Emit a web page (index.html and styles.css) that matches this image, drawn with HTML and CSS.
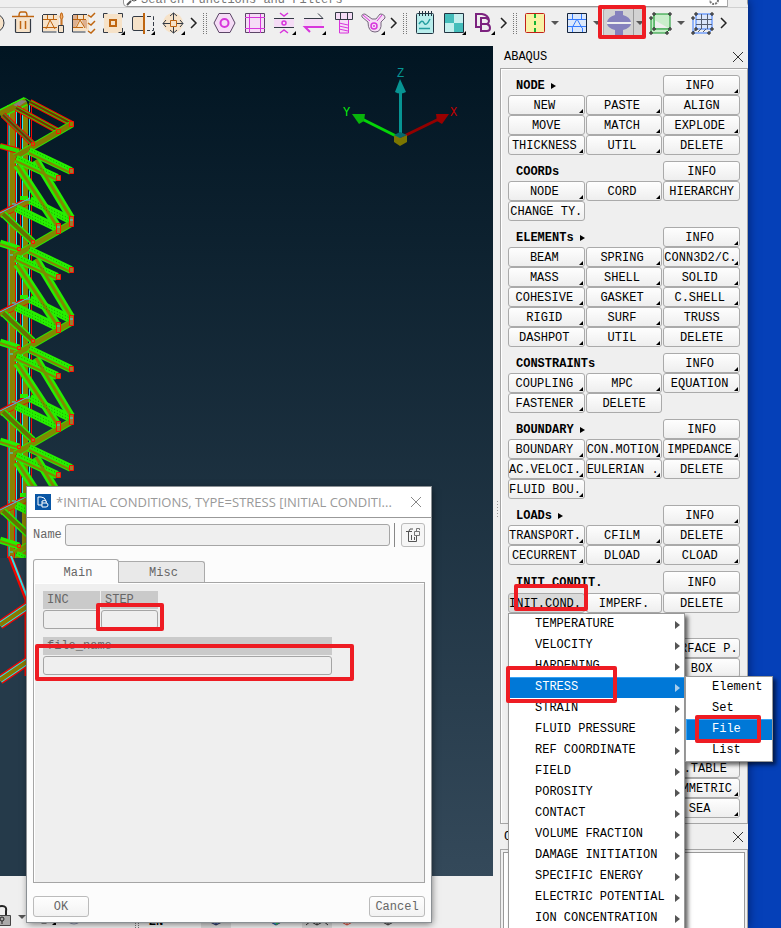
FILE: index.html
```html
<!DOCTYPE html>
<html lang="en">
<head>
<meta charset="utf-8">
<title>ABAQUS deck</title>
<link rel="stylesheet" href="styles.css">
</head>
<body>
<div class="desktop">
<div class="app">
  <header class="search-row">
    <div class="search-field">
      <svg class="glass" width="12" height="12" viewBox="0 0 12 12"><path d="M1 11l4-4" stroke="#555" stroke-width="2"/><circle cx="8" cy="4" r="3" fill="none" stroke="#555"/></svg>
      <input type="text" aria-label="Search" placeholder="Search Functions and Filters">
      <svg class="glass" width="12" height="12" viewBox="0 0 12 12"><circle cx="6" cy="6" r="4" fill="none" stroke="#777" stroke-width="2" stroke-dasharray="2 1"/></svg>
      <span class="search-end"></span>
    </div>
  </header>

  <nav class="toolbar" aria-label="Tools">
    <span class="edge"><svg width="9" height="30" viewBox="0 0 9 30"><circle cx="-5" cy="15" r="9" fill="#f6e2c8" stroke="#333a45"/></svg></span>
    <button class="tool" aria-label="Delete"><svg viewBox="0 0 30 30"><path d="M7 10h15v15H7z" fill="#f6e2c8"/><path d="M6.500 11v12.500q0 1 1 1h13q1 0 1-1V11" fill="none" stroke="#333a45" stroke-width="1.200"/><path d="M3 8.500h22M10 8q0-4 2-4h4q2 0 2 4M11.500 13v8M16.500 13v8" fill="none" stroke="#bf6510" stroke-width="1.500"/></svg></button>
    <button class="tool" aria-label="Mesh edit"><svg viewBox="0 0 30 30"><path d="M4 7h16v16H4z" fill="#f6e2c8"/><path d="M4 6.500h14M3.500 7v17h14" fill="none" stroke="#333a45"/><path d="M4 11.500h14M4 19.500h14M8.500 7v5M14.500 7v5M11 12l-4 9M11 12l5 9" fill="none" stroke="#bf6510"/><path d="M19.500 17.500h5v7h-5z" fill="#f6e2c8" stroke="#333a45"/><path d="M22 17v-6l-1-2 1-4h1l1 4-1 2v6" fill="#f6b06d" stroke="#bf6510"/></svg></button>
    <button class="tool" aria-label="Mesh check"><svg viewBox="0 0 30 30"><path d="M4 7h16v16H4z" fill="#f6e2c8"/><path d="M4 7h5v5H4zM13 12h5v9l-4-4zM4 12h6l-4 8H4z" fill="#ddb08f"/><path d="M4 6.500h14M3.500 7v17h13" fill="none" stroke="#333a45"/><path d="M4 11.500h13M4 19.500h10M8.500 7v5M14.500 7v5M11 12l-4 8M11 12l5 8" fill="none" stroke="#bf6510"/><path d="M19 7l3 2 4-4M19 15l3 2 4-4M19 23l3 2 4-4" fill="none" stroke="#bf6510" stroke-width="1.500"/></svg></button>
    <button class="tool" aria-label="Center"><svg viewBox="0 0 30 30"><path d="M5 6h18v19H5z" fill="#f6e2c8"/><path d="M4.500 10V5.500h4M19 5.500h4.500v4M23.500 20v4.500h-4M9 24.500H4.500v-4" fill="none" stroke="#333a45"/><path d="M11 12h6v6h-6z" fill="#f6e2c8" stroke="#bf6510" stroke-width="2"/><path d="M26 23v4h-4z"/></svg></button>
    <button class="tool" aria-label="Reflect"><svg viewBox="0 0 30 30"><path d="M15 8.500H5q-1.500 0-1.500 1.500v11q0 1.500 1.500 1.500h10" fill="#f6e2c8" stroke="#333a45"/><path d="M15 5v21" stroke="#bf6510" stroke-width="2"/><path d="M18 8.500h6.500v14H18" fill="none" stroke="#333a45" stroke-dasharray="4 2"/><path d="M26 23v4h-4z"/></svg></button>
    <button class="tool" aria-label="Move"><svg viewBox="0 0 30 30"><circle cx="14" cy="15" r="10" fill="#f6e2c8"/><path d="M14.500 5v20M4 15.500h20M11 8l3.500-3 3.500 3M11 22l3.500 3 3.500-3M7 12l-3 3.500 3 3.500M21 12l3 3.500-3 3.500" fill="none" stroke="#333a45"/><path d="M11.500 12.500h6v6h-6z" fill="#f6e2c8" stroke="#bf6510"/><path d="M26 23v4h-4z"/></svg></button>
    <span class="more"><svg viewBox="0 0 10 30"><path d="M2 10l5 5-5 5" fill="none" stroke="#222" stroke-width="1.500"/></svg></span>
    <span class="grip"></span>
    <button class="tool" aria-label="Nut"><svg viewBox="0 0 30 30"><path d="M10 5.500h11l5 9.500-5 9.500H10L5 15z" fill="#f5dcf6" stroke="#5b4566"/><circle cx="15.500" cy="15" r="4" fill="#f5dcf6" stroke="#d835dc" stroke-width="2"/></svg></button>
    <button class="tool" aria-label="Frame"><svg viewBox="0 0 30 30"><path d="M6.500 5.500h19v19h-19z" fill="#f5dcf6" stroke="#5b4566"/><path d="M6 9.500h20M6 20.500h20M10.500 6v19M21.500 6v19" stroke="#d835dc"/></svg></button>
    <button class="tool" aria-label="Joint"><svg viewBox="0 0 30 30"><path d="M5 10h20v9H5z" fill="#f5dcf6"/><path d="M5 10.500h20M5 19.500h20" stroke="#333a45"/><path d="M11 5l4 3 4-3M11 25l4-3 4 3" fill="none" stroke="#d835dc" stroke-width="1.500"/><circle cx="15" cy="15" r="2" fill="none" stroke="#d835dc" stroke-width="1.500"/><path d="M27 23v4h-4z"/></svg></button>
    <button class="tool" aria-label="Swap"><svg viewBox="0 0 30 30"><path d="M5 11h18v7H5z" fill="#f5dcf6"/><path d="M5 10.500h19l-5-5" fill="none" stroke="#333a45"/><path d="M25 19H6l5 5" fill="none" stroke="#d835dc" stroke-width="2"/><path d="M27 23v4h-4z"/></svg></button>
    <button class="tool" aria-label="Bolt"><svg viewBox="0 0 30 30"><path d="M6.500 4.500h17v7h-17z" fill="#f5dcf6" stroke="#333a45"/><path d="M11.500 5v7M18.500 5v7" stroke="#333a45"/><path d="M10.500 12v13h9V12" fill="#f5dcf6" stroke="#d835dc"/><path d="M10 15l9 2M10 18l9 2M10 21l9 2" stroke="#d835dc"/></svg></button>
    <button class="tool" aria-label="Link"><svg viewBox="0 0 30 30"><path d="M9 14L3 9q-1-3 3-3l7 5h4l4-5q5 0 5 4l-4 4q1 10-6 10t-7-10z" fill="#f5dcf6" stroke="#75677d"/><path d="M4 7l7 6M23 7l-5 6" stroke="#d835dc"/><circle cx="15" cy="18" r="3" fill="#f5dcf6" stroke="#d835dc" stroke-width="1.500"/><circle cx="15" cy="18" r="1" fill="#d835dc"/><path d="M26 23v4h-4z"/></svg></button>
    <span class="more"><svg viewBox="0 0 10 30"><path d="M2 10l5 5-5 5" fill="none" stroke="#222" stroke-width="1.500"/></svg></span>
    <span class="grip"></span>
    <button class="tool" aria-label="Report"><svg viewBox="0 0 30 30"><rect x="7.500" y="5.500" width="17" height="20" rx="1" fill="#b9edec" stroke="#223442"/><path d="M10.500 3v5M13.500 3v5M16.500 3v5M19.500 3v5M22.500 3v5" stroke="#223442"/><path d="M10 16q3-5 5-1t6-4M10 20.500h11" fill="none" stroke="#239da0" stroke-width="1.500"/></svg></button>
    <button class="tool" aria-label="Checker"><svg viewBox="0 0 30 30"><path d="M6 6h18v18H6z" fill="#c4efee"/><path d="M6 6h9v9H6zM15 15h10v9H15z" fill="#44bdbb"/><path d="M5.500 5.500h19v19h-19z" fill="none" stroke="#223442"/><path d="M27 23v4h-4z"/></svg></button>
    <button class="tool" aria-label="Deck"><svg viewBox="0 0 30 30"><path d="M12 19H7V6h6q6 1 7 6M12 10v13h6q3 0 3-3t-3-4q2-1 2-3t-3-3zM12 16h6" fill="none" stroke="#7c237f" stroke-width="2"/><path d="M26 23v4h-4z"/></svg></button>
    <span class="more"><svg viewBox="0 0 10 30"><path d="M2 10l5 5-5 5" fill="none" stroke="#222" stroke-width="1.500"/></svg></span>
    <span class="grip"></span>
    <button class="tool" aria-label="Split"><svg viewBox="0 0 30 30"><rect x="6.500" y="5.500" width="19" height="19" rx="1" fill="#f8f2a5" stroke="#c32118"/><path d="M16 6v18" stroke="#16b332" stroke-width="2" stroke-dasharray="4 3"/></svg></button>
    <span class="drop"></span>
    <button class="tool" aria-label="Mesh view"><svg viewBox="0 0 30 30"><path d="M6.500 5.500h19v19h-19z" fill="#dbe8fb"/><path d="M6 11.500h19M6 18.500h19M11.500 5v6M20.500 5v6M16 11l-5 9M16 11l5 9M11.500 20v4M21.500 20v4" stroke="#347bff" fill="none"/><path d="M6.500 5.500h19v19h-19z" fill="none" stroke="#15243c"/></svg></button>
    <span class="drop"></span>
    <span class="pressed">
      <button class="tool" aria-label="Section"><svg viewBox="0 0 30 30"><path d="M12 3h8v4q7 2 8 7H4q1-5 8-7zM4 16h24q-1 4-8 6v5h-8v-5q-7-2-8-6z" fill="#8581bd"/><path d="M4 15h24" stroke="#eee" stroke-width="2"/></svg></button>
      <span class="drop"></span>
    </span>
    <button class="tool" aria-label="Box select"><svg viewBox="0 0 30 30"><path d="M6 10l4-4v14l-4 5z" fill="#a9dcae"/><path d="M6 24l4-4h15l-4 4z" fill="#a9dcae"/><path d="M9 6h16v15H9zM6 10v15h15l4-4" fill="#c9eecb" stroke="#12952a"/><path d="M8 5h2v2H8zM24 5h2v2h-2zM24 20h2v2h-2zM5 9h2v2H5zM5 24h2v2H5zM21 24h2v2h-2zM8 20h2v2H8z" fill="#fff" stroke="#111"/></svg></button>
    <span class="drop"></span>
    <button class="tool" aria-label="Grid select"><svg viewBox="0 0 30 30"><path d="M9 6h16v15H9z" fill="#dbe6fb" stroke="#3679ff"/><path d="M9 11.500h16M9 16.500h16M14.500 6v15M20.500 6v15M6 24l4-3M11 24l3-3M16 24l3-3" stroke="#555e70"/><path d="M6 10v15h16l3-4" fill="none" stroke="#3679ff"/><path d="M8 5h2v2H8zM24 5h2v2h-2zM24 20h2v2h-2zM5 9h2v2H5zM5 24h2v2H5zM21 24h2v2h-2zM8 20h2v2H8z" fill="#fff" stroke="#111"/></svg></button>
    <span class="more"><svg viewBox="0 0 10 30"><path d="M4 10l5 5-5 5" fill="none" stroke="#222" stroke-width="1.500"/></svg></span>
  </nav>

  <div class="work">
    <main class="left">
      <div class="viewport">
        <svg class="model" width="100" height="830" viewBox="0 46 100 830">
          <defs>
            <g id="col">
              <path d="M12 0V99M25 0V99" stroke="#8a8200" stroke-width="6"/>
              <path d="M9 0V99M16.500 0V99M22.500 0V99M29.500 0V99" stroke="#28e6ee"/>
              <path d="M7.500 0V99M15.500 0V99M20.500 0V99M31.500 0V99" stroke="#f00800"/>
            </g>
            <g id="bay">
              <path d="M0 215L30 200" stroke="#f00800" stroke-width="7"/>
              <path d="M0 216L30 201" stroke="#8a8200" stroke-width="4"/>
              <path d="M0 213L30 198" stroke="#28e6ee"/>
              <g fill="none" stroke="#27ef00" stroke-width="8">
                <path d="M36 160L71 218"/><path d="M30 200L70 220"/><path d="M29 151L71 171"/>
                <path d="M16 159L57 178"/><path d="M17 165L57 226"/><path d="M16 208L57 228"/>
                <path d="M3 214L33 242" stroke-width="7"/><path d="M0 243L19 249" stroke-width="7"/><path d="M15 256L72 223" stroke-width="7"/>
                <path d="M20 198h8M22 251h12" stroke-width="4"/>
              </g>
              <g fill="none" stroke="#7f8a00">
                <path d="M36 160L71 218M17 165L57 226" stroke-width="3"/>
                <path d="M29 153L71 173M16 161L57 180M0 244L19 250" stroke-width="2"/>
                <path d="M3 214L33 242" stroke="#687000" stroke-width="4"/>
                <path d="M15 256L72 223" stroke-width="5"/>
              </g>
              <g fill="none" stroke="#159900" stroke-dasharray="1 2">
                <path d="M30 199L70 219M29 149L70 169M16 157L57 176M16 207L57 227M30 202L70 222M16 210L57 230"/>
              </g>
              <g fill="#9c7d2f" stroke="#ff1400">
                <path d="M56.500 175.500h4v5h-4zM69.500 168.500h4v5h-4zM31.500 240.500h3v3h-3zM17.500 247.500h3v3h-3z"/>
                <path d="M56.500 223.500h4v10h-4zM69.500 216.500h4v10h-4z"/>
              </g>
              <path d="M57 227h3M70 220h3M12 204h4M26 200h4M10 255h3" stroke="#28e6ee"/>
            </g>
          </defs>
          <use href="#col" y="105"/><use href="#col" y="204"/><use href="#col" y="303"/><use href="#col" y="402"/>
          <path d="M12 500v58M25 500v58" stroke="#8a8200" stroke-width="6"/>
          <path d="M9 500v58M16 500v58" stroke="#28e6ee"/><path d="M7.500 500v58M14.500 500v58" stroke="#f00800"/>
          <path d="M0 114L26 101" stroke="#27ef00" stroke-width="9"/><path d="M0 114L26 101" stroke="#847c00" stroke-width="6"/>
          <path d="M13 105l8-5 6 1-9 6z" fill="#887d77"/>
          <path d="M11 104L25 98l6 4" fill="none" stroke="#27ef00"/>
          <g fill="none">
            <path d="M30 102L72 124M16 108L58 131M3 115L33 144M0 146L19 151" stroke="#f00800" stroke-width="6"/>
            <path d="M30 102L72 124M16 108L58 131M0 146L19 151" stroke="#2bdc00" stroke-width="4"/>
            <path d="M3 115L33 144" stroke="#3d9a20" stroke-width="4"/>
            <path d="M30 102L72 124M16 108L58 131M3 115L33 144" stroke="#7a2d00" stroke-width="2"/>
            <path d="M15 157L72 124" stroke="#27ef00" stroke-width="7"/><path d="M15 157L72 124" stroke="#827c00" stroke-width="5"/>
          </g>
          <path d="M56.500 129.500h4v4h-4zM69.500 121.500h4v5h-4zM31.500 142.500h3v3h-3z" fill="#8a8200" stroke="#ff1400"/>
          <use href="#bay"/><use href="#bay" y="99"/><use href="#bay" y="198"/><use href="#bay" y="297"/><use href="#bay" y="396"/>
          <path d="M0 558h100v318H0z" class="mask"/>
          <path d="M10 556L28 602M27 600v76" fill="none" stroke="#f00800" stroke-width="5"/><path d="M11 556L29 602" stroke="#28e6ee" stroke-width="2"/>
          <path d="M0 625l28-19M0 680l28-19" stroke="#f00800" stroke-width="9"/>
          <path d="M0 625l28-19M0 680l28-19" stroke="#28e6ee" stroke-width="6"/>
          <path d="M0 625l28-19M0 680l28-19" stroke="#8a7800" stroke-width="4"/>
        </svg>
        <svg class="axes" width="140" height="100" viewBox="0 0 140 100">
          <path d="M70.500 76V30" stroke="#079493" stroke-width="3"/><path d="M70 19l6 13q-6 3-11 0z" fill="#079493"/>
          <path d="M70 78L30 58" stroke="#04d407" stroke-width="3"/><path d="M22 54l13 0-1 7-5 3z" fill="#08b40b"/>
          <path d="M70 78L111 58" stroke="#920000" stroke-width="3"/><path d="M119 54l-13 0 1 7 5 3z" fill="#980000"/>
          <path d="M64 75l6 3 7-3v7l-7 4-6-4z" fill="#7c7600"/><path d="M64 75l6-3 7 3-7 3z" fill="#07696b"/>
          <text x="67" y="17" fill="#079493">Z</text><text x="13" y="56" fill="#08ef0b">Y</text><text x="120" y="56" fill="#c40000">X</text>
        </svg>
      </div>
      <div class="statusbar">
        <svg class="lock" width="14" height="24" viewBox="0 0 14 24"><path d="M-3 12V7q0-5 5-5t4 5v5" fill="none" stroke="#222" stroke-width="2"/><path d="M-4 11.500h14.500v10H-4z" fill="#aaa" stroke="#444"/><circle cx="2" cy="15" r="2" fill="none" stroke="#222"/><path d="M2 17v3" stroke="#222"/></svg>
        <span class="drop wide"></span>
        <svg width="30" height="24" viewBox="0 0 30 24"><path d="M11.500 8h5v11h-5z" fill="#999" stroke="#222"/><path d="M26 17v4h-4z"/></svg>
        <svg width="30" height="24" viewBox="0 0 30 24"><circle cx="14" cy="11" r="9" fill="#e3e5ed" stroke="#8b92aa"/><circle cx="14" cy="11" r="6" fill="none" stroke="#8b92aa"/></svg>
        <span class="space"></span><span class="grip low"></span>
        <span class="lang">EN</span>
        <svg width="30" height="24" viewBox="0 0 30 24"><path d="M5 12.500h9v6H5zM14.500 10.500h10v8h-10z" fill="#eee" stroke="#777"/></svg>
        <svg class="on" width="30" height="24" viewBox="0 0 30 24"><path d="M3 7l12-5 12 5v8l-12 6-12-6z" fill="#7188cf" stroke="#28345c"/><path d="M15 12v9" stroke="#28345c"/></svg>
        <svg width="30" height="24" viewBox="0 0 30 24"><path d="M5.500 6.500h19v12h-19z" fill="#cbd8f5" stroke="#15243c"/><path d="M11.500 7v11M18.500 7v11" stroke="#15243c"/></svg>
        <svg width="30" height="24" viewBox="0 0 30 24"><path d="M4 7l11-5 11 5v8l-11 6-11-6z" fill="#24b8d0" stroke="#26418e"/><path d="M15 12v9l8-5z" fill="#37c94e"/></svg>
        <span class="space small"></span>
        <svg class="on" width="30" height="24" viewBox="0 0 30 24"><path d="M4 7l11-5 11 5v8l-11 6-11-6zM15 21v-9M4 21l11-9 11 9" fill="#ddd" stroke="#333"/></svg>
        <svg width="30" height="24" viewBox="0 0 30 24"><path d="M4 7l11-5 11 5v8l-11 6-11-6zM15 12v9" fill="none" stroke="#e24a36"/></svg>
        <span class="space small"></span>
        <svg width="30" height="24" viewBox="0 0 30 24"><path d="M4 7l11-5 11 5v8l-11 6-11-6zM15 12v9" fill="#aaa" stroke="#444"/></svg>
      </div>
    </main>

    <aside class="dock">
      <div class="dock-title"><span>ABAQUS</span><button class="close" aria-label="Close"><svg width="12" height="12" viewBox="0 0 12 12"><path d="M1 1l10 10M11 1L1 11" stroke="#333"/></svg></button></div>
      <div class="deck">
        <section><h2 class="arrow">NODE</h2><button class="m">INFO</button>
          <button class="m">NEW</button><button class="m">PASTE</button><button>ALIGN</button>
          <button>MOVE</button><button class="m">MATCH</button><button class="m">EXPLODE</button>
          <button class="m">THICKNESS</button><button class="m">UTIL</button><button>DELETE</button></section>
        <section><h2>COORDs</h2><button>INFO</button>
          <button class="m">NODE</button><button class="m">CORD</button><button>HIERARCHY</button>
          <button>CHANGE TY.</button></section>
        <section><h2 class="arrow">ELEMENTs</h2><button class="m">INFO</button>
          <button class="m">BEAM</button><button class="m">SPRING</button><button class="m">CONN3D2/C.</button>
          <button class="m">MASS</button><button class="m">SHELL</button><button class="m">SOLID</button>
          <button class="m">COHESIVE</button><button class="m">GASKET</button><button class="m">C.SHELL</button>
          <button class="m">RIGID</button><button class="m">SURF</button><button>TRUSS</button>
          <button class="m">DASHPOT</button><button class="m">UTIL</button><button>DELETE</button></section>
        <section><h2>CONSTRAINTs</h2><button class="m">INFO</button>
          <button class="m">COUPLING</button><button class="m">MPC</button><button class="m">EQUATION</button>
          <button class="m">FASTENER</button><button>DELETE</button></section>
        <section><h2 class="arrow">BOUNDARY</h2><button>INFO</button>
          <button class="m">BOUNDARY</button><button class="m">CON.MOTION</button><button class="m">IMPEDANCE</button>
          <button class="m">AC.VELOCI.</button><button class="m">EULERIAN .</button><button>DELETE</button>
          <button class="m">FLUID BOU.</button></section>
        <section><h2 class="arrow">LOADs</h2><button class="m">INFO</button>
          <button class="m">TRANSPORT.</button><button class="m">CFILM</button><button>DELETE</button>
          <button class="m">CECURRENT</button><button class="m">DLOAD</button><button class="m">CLOAD</button></section>
        <section class="init"><h2>INIT.CONDIT.</h2><button>INFO</button>
          <div class="menu-host"><button class="m down">INIT.COND.</button>
            <ul class="menu">
              <li><button>TEMPERATURE</button></li>
              <li><button>VELOCITY</button></li>
              <li><button>HARDENING</button></li>
              <li class="picked"><button>STRESS</button>
                <ul class="menu sub">
                  <li><button>Element</button></li>
                  <li><button>Set</button></li>
                  <li class="picked"><button>File</button></li>
                  <li><button>List</button></li>
                </ul></li>
              <li><button>STRAIN</button></li>
              <li><button>FLUID PRESSURE</button></li>
              <li><button>REF COORDINATE</button></li>
              <li><button>FIELD</button></li>
              <li><button>POROSITY</button></li>
              <li><button>CONTACT</button></li>
              <li><button>VOLUME FRACTION</button></li>
              <li><button>DAMAGE INITIATION</button></li>
              <li><button>SPECIFIC ENERGY</button></li>
              <li><button>ELECTRIC POTENTIAL</button></li>
              <li><button>ION CONCENTRATION</button></li>
            </ul></div>
          <button>IMPERF.</button><button>DELETE</button></section>
        <section class="misc">
          <button>SURFACE P.</button><button>BOX</button>
          <span class="rows"></span>
          <button>A.TABLE</button><button class="m">SYMMETRIC</button><button class="m">SEA</button></section>
      </div>
      <div class="dock-title lower"><span>C</span><button class="close" aria-label="Close panel"><svg width="12" height="12" viewBox="0 0 12 12"><path d="M1 1l10 10M11 1L1 11" stroke="#333"/></svg></button></div>
      <div class="list-pane"><div class="list"></div></div>
    </aside>
  </div>
</div>
</div>

<form class="dialog">
  <div class="dialog-title">
    <svg width="16" height="16" viewBox="0 0 16 16"><path d="M0 0h16v16H0z" fill="#0956a5"/><path d="M7 11H3V3h3q4 0 5 4M7 7v6h4q2 0 2-2t-2-2q1-1 0-2t-4 0M7 9h4" fill="none" stroke="#fff"/></svg>
    <span>*INITIAL CONDITIONS, TYPE=STRESS [INITIAL CONDITI...</span>
    <button type="button" class="close" aria-label="Close dialog"><svg width="12" height="12" viewBox="0 0 12 12"><path d="M1 1l10 10M11 1L1 11" stroke="#888"/></svg></button>
  </div>
  <div class="dialog-body">
    <div class="name-row">
      <label for="nm">Name</label><input id="nm" type="text">
      <i class="rule"></i>
      <button type="button" class="trash" aria-label="Clear"><svg width="16" height="16" viewBox="0 0 16 16"><path d="M1 4.500h6M3.500 5v9.500h8V9M6.500 8v5M9.500 10v3M4 4l1-2h3" fill="none" stroke="#555"/><path d="M9.500 4.500h5v4h-5zM11.500 4V1.500h3V3" fill="none" stroke="#777"/></svg></button>
    </div>
    <div class="tabs"><button type="button" class="tab current">Main</button><button type="button" class="tab">Misc</button></div>
    <div class="pane">
      <div class="fields">
        <div class="field"><label for="inc">INC</label><input id="inc" type="text"></div>
        <div class="field"><label for="step">STEP</label><input id="step" type="text"></div>
      </div>
      <div class="field file"><label for="fn">file_name</label><input id="fn" type="text"></div>
    </div>
    <div class="actions"><button type="button">OK</button><button type="button">Cancel</button></div>
  </div>
</form>

<i class="mark mark-tool"></i>
<i class="mark mark-step"></i>
<i class="mark mark-path"></i>
<i class="mark mark-init"></i>
<i class="mark mark-stress"></i>
<i class="mark mark-file"></i>
</body>
</html>
```
FILE: styles.css
```css
* { box-sizing: border-box; }
body { margin: 0; height: 100vh; overflow: hidden; position: relative; background: #0540b8; color: #000; font: 12px/16px "Liberation Mono", monospace; }
button, input { font: inherit; color: inherit; margin: 0; padding: 0; }
svg { display: block; flex: none; }
.desktop { height: 100%; padding-right: 33px; background: #0540b8; }
.app { height: 100%; display: flex; flex-direction: column; background: #efefef; box-shadow: 0 0 10px #001d62; }

.search-row { flex: none; height: 8px; display: flex; align-items: flex-end; padding-left: 123px; overflow: hidden; border-bottom: 1px solid #d0d0d0; }
.search-field { flex: 1; height: 15px; display: flex; align-items: center; background: #fff; border: 1px solid #999; border-radius: 4px; padding-left: 2px; }
.search-field input { flex: 1; min-width: 0; height: 13px; border: 0; background: none; padding-left: 3px; }
.search-field input::placeholder { color: #777; opacity: 1; }
.search-end { width: 20px; height: 15px; margin-left: 7px; background: #eee; border-left: 1px solid #aaa; }

.toolbar { flex: none; height: 37px; display: flex; align-items: flex-start; overflow: hidden; }
.tool { flex: none; width: 30px; height: 30px; border: 0; background: none; }
.tool svg { width: 30px; height: 30px; }
.edge { width: 9px; flex: none; }
.more { width: 10px; height: 30px; flex: none; }
.grip { flex: none; width: 10px; height: 22px; margin-top: 4px; background: repeating-linear-gradient(#efefef 0 1px, transparent 1px 2px), linear-gradient(90deg, transparent 4px, #777 4px 5px, transparent 5px 7px, #777 7px 8px, transparent 8px); }
.drop { flex: none; width: 12px; height: 30px; display: flex; align-items: center; justify-content: center; }
.drop::after { content: ""; border: 4px solid transparent; border-top-color: #555; border-bottom: 0; }
.pressed { display: flex; background: #d2d2d2; border-radius: 3px; box-shadow: inset 0 0 0 1px #aaa; }
.pressed .drop { border-left: 1px solid #999; }

.work { flex: 1; min-height: 0; display: flex; border-top: 1px solid #efefef; }
.left { flex: 1; min-width: 0; display: flex; flex-direction: column; }
.viewport { flex: 1; position: relative; overflow: hidden; background: linear-gradient(#011522, #34495a); }
.model { height: 830px; }
.mask { fill: #253a4a; }
.axes { position: absolute; right: 23px; top: 14px; font: 12px "Liberation Mono", monospace; }
.statusbar { flex: none; height: 52px; display: flex; align-items: flex-end; overflow: hidden; }
.statusbar .lock { align-self: center; margin-top: 28px; }
.drop.wide { width: 16px; height: 22px; }
.grip.low { margin-top: 0; }
.space { width: 41px; flex: none; }
.space.small { width: 11px; }
.lang { width: 30px; flex: none; text-align: center; font-weight: bold; line-height: 12px; }
.on { background: #d9d9d9; }

.dock { flex: none; width: 255px; padding-left: 7px; display: flex; flex-direction: column; background: repeating-linear-gradient(transparent 0 1px, #efefef 1px 3px) 0 455px / 7px 16px no-repeat, linear-gradient(90deg, transparent 4px, #999 4px 5px, transparent 5px) 0 455px / 7px 16px no-repeat #efefef; }
.dock-title { flex: none; height: 22px; padding: 0 4px; display: flex; align-items: center; justify-content: space-between; }
.dock-title.lower { height: 25px; }
.close { border: 0; background: none; line-height: 0; }
.deck { flex: none; border: 1px solid #a5a5a5; box-shadow: inset 1px 1px #fff; padding: 6px 7px 5px; display: flex; flex-direction: column; gap: 6px; }
section { display: grid; grid-template-columns: repeat(3, 1fr); grid-auto-rows: 20px; column-gap: 1px; }
section h2 { grid-column: 1 / 3; margin: 0; padding-left: 8px; font-size: 12px; line-height: 24px; display: flex; align-items: center; gap: 6px; padding-top: 2px; }
h2.arrow::after { content: ""; border: 3px solid transparent; border-left: 5px solid #000; border-right: 0; }
section button { position: relative; overflow: hidden; white-space: nowrap; height: 20px; padding-top: 2px; line-height: 16px; border: 1px solid #aaa; border-radius: 3px; background: linear-gradient(#fefefe, #eee); }
section button.m { padding-right: 4px; }
section button.m::after { content: ""; position: absolute; right: 1px; bottom: 1px; border: 2px solid #000; border-top-color: transparent; border-left-color: transparent; }
section.init { grid-template-rows: 22px 20px; }
.init > button { height: auto; }
.menu-host { position: relative; display: grid; }
section button.down { background: #dadada; }
.misc { padding-top: 19px; }
.misc > * { grid-column: 3; }
.rows { grid-row: span 4; }

.menu { position: absolute; z-index: 2; left: 0; top: 20px; width: 177px; margin: 0; padding: 0; list-style: none; background: #fff; border: 1px solid #999; box-shadow: 3px 3px 4px rgba(0, 0, 0, .6); }
.menu li { position: relative; height: 21px; display: flex; align-items: center; }
.menu li button { flex: 1; height: 21px; border: 0; border-radius: 0; background: none; padding: 0 0 0 26px; line-height: 21px; text-align: left; }
.menu li::after { content: ""; position: absolute; right: 4px; border: 4px solid transparent; border-left: 5px solid #555; border-right: 0; }
.menu .picked { background: #0078d7; box-shadow: inset 1px 1px #37a2f5; }
.menu .picked > button { color: #fff; }
.menu .picked::after { border-left-color: #a8cdec; }
.menu .sub { left: 176px; top: -1px; width: 88px; }
.menu .sub li::after { display: none; }
.menu .sub li button { color: #000; }
.menu .sub .picked button { color: #fff; }

.list-pane { flex: 1; border: 1px solid #a5a5a5; border-bottom: 0; padding: 2px 2px 0; }
.list { height: 100%; background: #fff; border: 1px solid #999; border-bottom: 0; }

.dialog { position: absolute; left: 27px; top: 487px; width: 404px; height: 435px; display: flex; flex-direction: column; color: #666; background: #fcfcfc; box-shadow: 0 0 0 1px #8b9094, 1px 2px 7px #0008; }
.dialog-title { flex: none; height: 31px; padding: 0 9px 0 8px; display: flex; align-items: center; gap: 5px; background: #fff; border-bottom: 1px solid #999; color: #999; font: 13px/18px "Open Sans", sans-serif; }
.dialog-title span { flex: 1; white-space: nowrap; }
.dialog-body { flex: 1; display: flex; flex-direction: column; padding: 5px 6px; }
.name-row { display: flex; align-items: center; height: 24px; }
.name-row label { width: 32px; flex: none; }
.dialog input { min-width: 0; border: 1px solid #a5a5a5; border-radius: 3px; background: #efefef; }
.name-row input { flex: 1; height: 22px; }
.rule { width: 1px; height: 24px; margin: 0 6px 0 4px; background: #888; }
.trash { width: 24px; height: 24px; display: grid; place-items: center; border: 1px solid #bbb; border-radius: 3px; background: #f6f6f6; }
.tabs { display: flex; align-items: flex-end; height: 23px; margin-top: 12px; position: relative; }
.tab { width: 86px; height: 21px; border: 1px solid #aaa; border-left: 0; border-bottom: 0; border-radius: 0 3px 0 0; background: #e9e9e9; padding: 2px 0 0 4px; }
.tab.current { width: 86px; height: 24px; margin-bottom: -1px; border-left: 1px solid #aaa; border-radius: 3px 3px 0 0; background: #fcfcfc; }
.pane { flex: 1; padding: 8px 9px; background: #efefef; border: 1px solid #a5a5a5; box-shadow: inset 1px 1px #fff; }
.fields { display: flex; gap: 1px; margin-bottom: 8px; }
.field { width: 57px; display: flex; flex-direction: column; gap: 1px; }
.field.file { width: 289px; }
.field label { height: 18px; padding-left: 4px; line-height: 18px; background: #cacaca; }
.field input { height: 19px; }
.actions { display: flex; justify-content: space-between; padding-top: 13px; }
.actions button { width: 56px; height: 21px; border: 1px solid #bbb; border-radius: 3px; background: linear-gradient(#fefefe, #f2f2f2); }

.mark { position: absolute; z-index: 5; border: 4px solid #ee1c23; border-radius: 2px; pointer-events: none; }
.mark-tool { left: 598px; top: 5px; width: 48px; height: 34px; }
.mark-step { left: 96px; top: 603px; width: 68px; height: 28px; }
.mark-path { left: 35px; top: 644px; width: 319px; height: 37px; }
.mark-init { left: 514px; top: 584px; width: 74px; height: 27px; }
.mark-stress { left: 506px; top: 666px; width: 111px; height: 37px; }
.mark-file { left: 695px; top: 715px; width: 66px; height: 28px; }
```
